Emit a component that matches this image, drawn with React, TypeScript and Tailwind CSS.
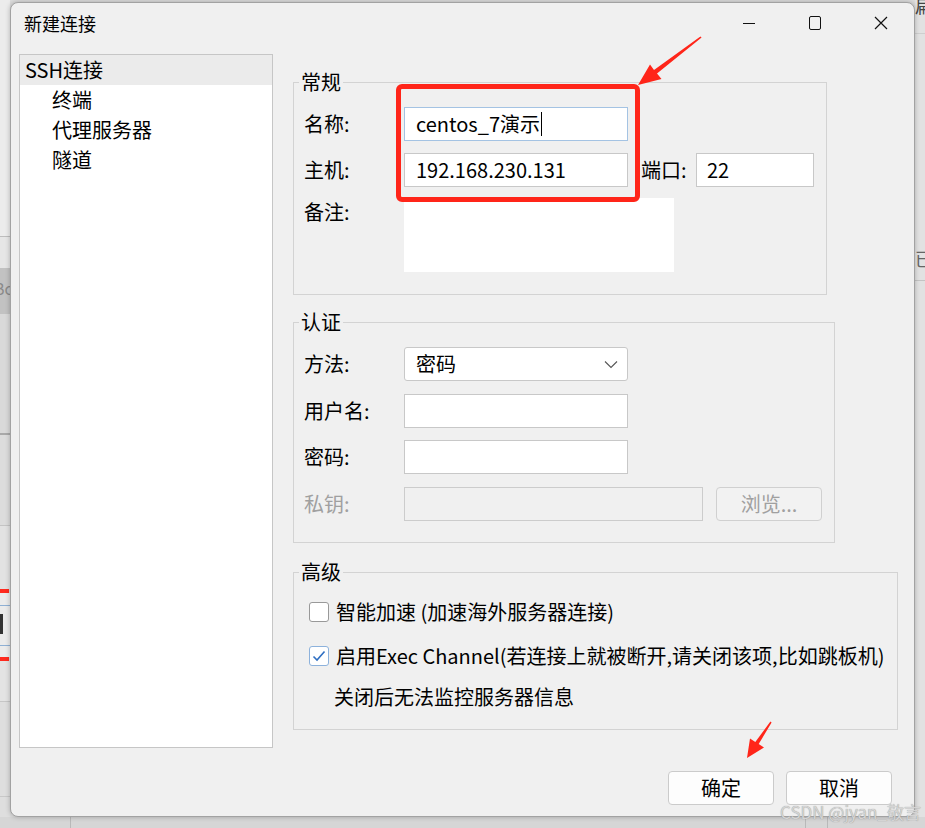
import React from "react";

function Backdrop() {
  return (
    <>
      {/* left strip (windows behind) */}
      <div className="absolute left-0 top-0 w-[10px] h-[236px] bg-[#ececec]" />
      <div className="absolute left-0 top-[236px] w-[10px] h-[1px] bg-[#bdbdbd]" />
      <div className="absolute left-0 top-[237px] w-[10px] h-[31px] bg-[#e6e6e6]" />
      <div className="absolute left-0 top-[268px] w-[10px] h-[46px] bg-[#c2c2c2] overflow-hidden">
        <span className="absolute left-[-6px] top-[12px] text-[16px] leading-none text-[#8a8a8a]">Bc</span>
      </div>
      <div className="absolute left-0 top-[314px] w-[10px] h-[120px] bg-[#d9d9d9]" />
      <div className="absolute left-0 top-[433px] w-[10px] h-[2px] bg-[#a9a9a9]" />
      <div className="absolute left-0 top-[435px] w-[10px] h-[90px] bg-[#dcdcdc]" />
      <div className="absolute left-0 top-[525px] w-[10px] h-[1px] bg-[#c4c4c4]" />
      <div className="absolute left-0 top-[526px] w-[10px] h-[63px] bg-[#e2e2e2]" />
      <div className="absolute left-0 top-[589px] w-[9px] h-[4px] bg-[#ff2a1e]" />
      <div className="absolute left-0 top-[593px] w-[10px] h-[64px] bg-[#ebebeb]" />
      <div className="absolute left-0 top-[605px] w-[10px] h-[1px] bg-[#8fb0d4]" />
      <div className="absolute left-0 top-[614px] w-[3px] h-[20px] bg-[#333]" />
      <div className="absolute left-0 top-[645px] w-[10px] h-[1px] bg-[#8fb0d4]" />
      <div className="absolute left-0 top-[657px] w-[9px] h-[4px] bg-[#ff2a1e]" />
      <div className="absolute left-0 top-[661px] w-[10px] h-[40px] bg-[#e3e3e3]" />
      <div className="absolute left-0 top-[701px] w-[10px] h-[1px] bg-[#c6c6c6]" />
      <div className="absolute left-0 top-[702px] w-[10px] h-[126px] bg-[#dedede]" />
      <div className="absolute left-0 top-[796px] w-[10px] h-[1px] bg-[#c8c8c8]" />
      {/* right strip */}
      <div className="absolute right-0 top-0 w-[10px] h-[828px] bg-[#e2e2e2]" />
      <div className="absolute right-0 top-[33px] w-[10px] h-[1px] bg-[#cfcfcf]" />
      <div className="absolute right-0 top-[280px] w-[10px] h-[1px] bg-[#c4c4c4]" />
      <span className="absolute left-[915px] top-[-4px] text-[18px] leading-none text-[#444]">扁</span>
      <span className="absolute left-[915px] top-[249px] text-[18px] leading-none text-[#666]">已</span>
      {/* bottom strip */}
      <div className="absolute left-0 top-[817px] w-[925px] h-[11px] bg-[#d6d6d6]" />
      <div className="absolute left-[805px] top-[817px] w-[1px] h-[11px] bg-[#b9b9b9]" />
      <div className="absolute left-[827px] top-[817px] w-[1px] h-[11px] bg-[#b9b9b9]" />
      <div className="absolute left-[70px] top-[817px] w-[1px] h-[11px] bg-[#b9b9b9]" />
    </>
  );
}

function TitleBar() {
  return (
    <div className="flex h-[40px] items-center justify-between">
      <span className="pl-[13px] text-[18px] leading-none">新建连接</span>
      <div className="flex h-[40px]">
        <div className="flex w-[66px] items-center justify-center">
          <div className="h-[1px] w-[12px] bg-[#111]" />
        </div>
        <div className="flex w-[66px] items-center justify-center">
          <div className="h-[14px] w-[12px] rounded-[2px] border-[1.5px] border-[#111]" />
        </div>
        <div className="flex w-[66px] items-center justify-center">
          <svg width="14" height="14" viewBox="0 0 14 14">
            <path d="M1 1L13 13M13 1L1 13" stroke="#111" strokeWidth="1.2" fill="none" />
          </svg>
        </div>
      </div>
    </div>
  );
}

function Tree() {
  return (
    <div className="h-[694px] w-[254px] shrink-0 border border-[#c6c6c6] bg-white">
      <div className="h-[30px] bg-[#ebebeb] pl-[5px] text-[20px] leading-[30px]">SSH连接</div>
      <div className="h-[30px] pl-[32px] text-[20px] leading-[30px]">终端</div>
      <div className="h-[30px] pl-[32px] text-[20px] leading-[30px]">代理服务器</div>
      <div className="h-[30px] pl-[32px] text-[20px] leading-[30px]">隧道</div>
    </div>
  );
}

function Label({ children, grey }: { children: React.ReactNode; grey?: boolean }) {
  return (
    <span
      className={
        grey
          ? "w-[100px] shrink-0 text-[20px] leading-none text-[#a0a0a0]"
          : "w-[100px] shrink-0 text-[20px] leading-none"
      }
    >
      {children}
    </span>
  );
}

export default function App() {
  return (
    <div className="relative h-[828px] w-[925px] overflow-hidden bg-[#dcdcdc] font-['Noto_Sans_CJK_SC','Microsoft_YaHei',sans-serif] text-black">
      <Backdrop />
      <div className="relative ml-[10px] mt-[2px] flex h-[815px] w-[905px] flex-col rounded-[8px] border border-[#a2a2a2] bg-[#f0f0f0] shadow-[0_0_5px_rgba(0,0,0,0.25)]">
        <TitleBar />
        <div className="flex pl-[8px] pt-[11px]">
          <Tree />
          <div className="ml-[20px] flex w-[605px] flex-col pt-[17px]">
            {/* 常规 */}
            <fieldset className="w-[534px] border border-[#d3d3d3] pb-[22px] pt-[14px]">
              <legend className="ml-[5px] px-[2px] text-[20px] leading-[22px]">常规</legend>
              <div className="pl-[10px]">
                <div className="flex h-[34px] items-center">
                  <Label>名称:</Label>
                  <div className="flex h-[34px] w-[224px] items-center border border-[#a4c3e3] bg-white pl-[11px] text-[20px] leading-none">
                    centos_7演示
                    <span className="ml-[1px] h-[24px] w-[1px] bg-black" />
                  </div>
                </div>
                <div className="mt-[12px] flex h-[34px] items-center">
                  <Label>主机:</Label>
                  <div className="flex h-[34px] w-[224px] items-center border border-[#c8c8c8] bg-white pl-[11px] text-[20px] leading-none">
                    192.168.230.131
                  </div>
                  <span className="ml-[13px] w-[55px] text-[20px] leading-none">端口:</span>
                  <div className="flex h-[34px] w-[118px] items-center border border-[#c8c8c8] bg-white pl-[10px] text-[20px] leading-none">
                    22
                  </div>
                </div>
                <div className="mt-[11px] flex">
                  <span className="w-[100px] shrink-0 text-[20px] leading-[28px]">备注:</span>
                  <div className="h-[74px] w-[270px] bg-white" />
                </div>
              </div>
            </fieldset>

            {/* 认证 */}
            <fieldset className="mt-[16px] w-[542px] border border-[#d3d3d3] pb-[21px] pt-[14px]">
              <legend className="ml-[5px] px-[2px] text-[20px] leading-[22px]">认证</legend>
              <div className="pl-[10px]">
                <div className="flex h-[34px] items-center">
                  <Label>方法:</Label>
                  <div className="flex h-[34px] w-[224px] items-center justify-between rounded-[3px] border border-[#c8c8c8] bg-white pl-[11px] pr-[9px] text-[20px] leading-none">
                    密码
                    <svg width="14" height="9" viewBox="0 0 14 9">
                      <path d="M1 1.5L7 7.5L13 1.5" stroke="#555" strokeWidth="1.1" fill="none" />
                    </svg>
                  </div>
                </div>
                <div className="mt-[13px] flex h-[34px] items-center">
                  <Label>用户名:</Label>
                  <div className="h-[34px] w-[224px] border border-[#c8c8c8] bg-white" />
                </div>
                <div className="mt-[12px] flex h-[34px] items-center">
                  <Label>密码:</Label>
                  <div className="h-[34px] w-[224px] border border-[#c8c8c8] bg-white" />
                </div>
                <div className="mt-[13px] flex h-[34px] items-center">
                  <Label grey>私钥:</Label>
                  <div className="h-[34px] w-[299px] border border-[#cccccc] bg-[#f0f0f0]" />
                  <div className="ml-[13px] flex h-[34px] w-[106px] items-center justify-center rounded-[4px] border border-[#d0d0d0] bg-[#f2f2f2] text-[20px] leading-none text-[#a0a0a0]">
                    浏览...
                  </div>
                </div>
              </div>
            </fieldset>

            {/* 高级 */}
            <fieldset className="mt-[18px] w-[605px] border border-[#d3d3d3] pb-[17px] pt-[14px]">
              <legend className="ml-[5px] px-[2px] text-[20px] leading-[22px]">高级</legend>
              <div className="pl-[15px]">
                <div className="flex h-[30px] items-center">
                  <div className="h-[20px] w-[20px] rounded-[3px] border border-[#999] bg-white" />
                  <span className="ml-[7px] text-[20px] leading-none">智能加速 (加速海外服务器连接)</span>
                </div>
                <div className="mt-[14px] flex h-[30px] items-center">
                  <div className="flex h-[20px] w-[20px] items-center justify-center rounded-[3px] border border-[#8db2dc] bg-white">
                    <svg width="14" height="12" viewBox="0 0 14 12">
                      <path d="M1.5 6.5L5 10L12.5 1.5" stroke="#2f6fc2" strokeWidth="1.6" fill="none" />
                    </svg>
                  </div>
                  <span className="ml-[7px] text-[20px] leading-none">
                    启用Exec Channel(若连接上就被断开,请关闭该项,比如跳板机)
                  </span>
                </div>
                <div className="mt-[11px] flex h-[30px] items-center pl-[25px] text-[20px] leading-none">
                  关闭后无法监控服务器信息
                </div>
              </div>
            </fieldset>

            <div className="mt-[41px] flex justify-end gap-[12px] pr-[6px]">
              <div className="flex h-[34px] w-[106px] items-center justify-center rounded-[4px] border border-[#cbcbcb] bg-[#fdfdfd] text-[20px] leading-none">
                确定
              </div>
              <div className="flex h-[34px] w-[106px] items-center justify-center rounded-[4px] border border-[#cbcbcb] bg-[#fdfdfd] text-[20px] leading-none">
                取消
              </div>
            </div>
          </div>
        </div>
      </div>

      {/* annotations */}
      <div className="absolute left-[396px] top-[84px] h-[118px] w-[244px] rounded-[6px] border-[5px] border-[#ff2519]" />
      <svg className="absolute left-0 top-0" width="925" height="828" viewBox="0 0 925 828">
        <polygon
          points="700.4,36.4 701.6,37.6 657,73.6 661.5,79 638,85 650,64.4 654,70.1"
          fill="#ff2519"
        />
        <polygon
          points="770.4,721.6 771.6,722.4 758.7,744.1 764,747.6 747,758 750,738.6 755.3,741.9"
          fill="#ff2519"
        />
      </svg>
      <span className="absolute left-[780px] top-[802px] text-[17px] leading-[20px] text-[#d4d4d4] [text-shadow:0_0_1px_#8a8a8a]">
        CSDN @jyan_敬言
      </span>
    </div>
  );
}
